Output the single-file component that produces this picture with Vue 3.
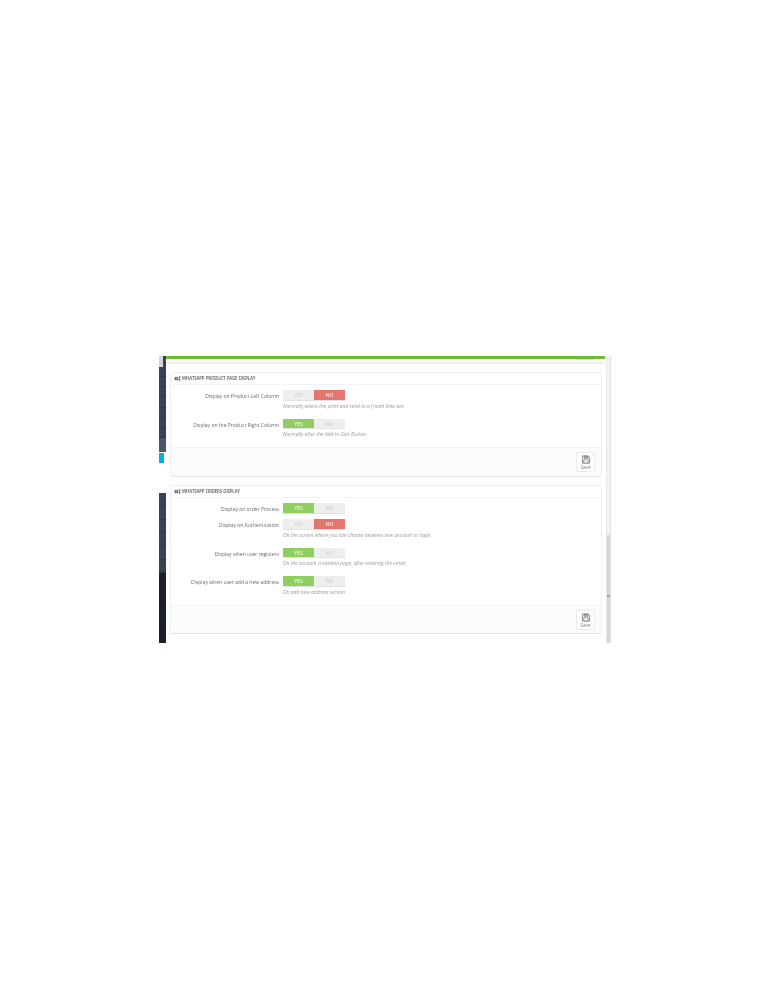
<script setup>
const panels = [
  {
    title: 'WHATSAPP PRODUCT PAGE DISPLAY',
    rows: [
      { label: 'Display on Product Left Column', on: false, help: 'Normally where the print and send to a friend links are' },
      { label: 'Display on the Product Right Column', on: true, help: 'Normally after the Add to Cart Button' }
    ]
  },
  {
    title: 'WHATSAPP ORDERS DISPLAY',
    rows: [
      { label: 'Display on order Process', on: true, help: '' },
      { label: 'Display on Authentication', on: false, help: 'On the screen where you can choose between new account or login' },
      { label: 'Display when user registers', on: true, help: 'On the account creatinon page, after entering the email' },
      { label: 'Display when user add a new address', on: true, help: 'On add new address section' }
    ]
  }
]
const navTop = [0, 1, 2, 3, 4, 5, 6]
const navBottom = [0, 1, 2, 3, 4, 5]
</script>

<template>
  <div class="page">
    <div class="frame">
      <aside class="sidebar">
        <div class="nav nav-top">
          <div class="grip"></div>
          <div v-for="n in navTop" :key="n" class="nav-item"></div>
          <div class="nav-item active"></div>
        </div>
        <div class="blue-gap"><div class="blue"></div></div>
        <div class="nav nav-bottom">
          <div v-for="n in navBottom" :key="n" class="nav-item"></div>
        </div>
        <div class="nav-dark"></div>
      </aside>

      <main class="content">
        <div class="toolbar"><span class="toolbar-btn"></span></div>

        <section v-for="panel in panels" :key="panel.title" class="panel">
          <header class="panel-head">
            <svg class="cogs" viewBox="0 0 14 10" width="7" height="5" aria-hidden="true">
              <circle cx="4.500" cy="5" r="2.600" fill="none" stroke="#4a4f57" stroke-width="2.200" />
              <circle cx="11" cy="2.600" r="1.400" fill="none" stroke="#4a4f57" stroke-width="1.600" />
              <circle cx="11" cy="7.600" r="1.400" fill="none" stroke="#4a4f57" stroke-width="1.600" />
            </svg>
            <h3>{{ panel.title }}</h3>
          </header>

          <div class="panel-body">
            <div v-for="row in panel.rows" :key="row.label" class="row" :class="{ 'has-help': row.help }">
              <label class="row-label">{{ row.label }}</label>
              <div class="row-field">
                <div class="switch">
                  <span class="opt" :class="{ yes: row.on }">YES</span>
                  <span class="opt" :class="{ no: !row.on }">NO</span>
                </div>
                <p v-if="row.help" class="help">{{ row.help }}</p>
              </div>
            </div>
          </div>

          <footer class="panel-foot">
            <button class="save" type="button">
              <svg viewBox="0 0 20 20" width="10" height="10" aria-hidden="true">
                <path d="M2 2h13l3 3v13H2z" fill="#f4f4f4" stroke="#5a6068" stroke-width="1.500" stroke-linejoin="round" />
                <path d="M6 2.500h8v5H6z" fill="#a9aeb3" stroke="#5a6068" stroke-width="1.100" />
                <path d="M5 11h10v6.500H5z" fill="#fff" stroke="#5a6068" stroke-width="1.300" />
              </svg>
              <span>Save</span>
            </button>
          </footer>
        </section>
      </main>

      <div class="scrollbar">
        <div class="thumb"><span class="thumb-grip"></span></div>
      </div>
    </div>
  </div>
</template>

<style>
html, body { margin: 0; background: #fff; }
</style>

<style scoped>
.page {
  height: 1000px;
  box-sizing: border-box;
  padding: 356px 0 0 159px;
  background: #fff;
  overflow: hidden;
  font-family: "Open Sans", "Liberation Sans", sans-serif;
}
.frame {
  display: flex;
  width: 452px;
  height: 287px;
  overflow: hidden;
  filter: blur(0.5px);
}
.sidebar {
  width: 7px;
  flex: none;
  display: flex;
  flex-direction: column;
  background: #fff;
}
.nav-top { height: 96px; background: #3a4152; display: flex; flex-direction: column; }
.grip { height: 11px; width: 4px; background: #d3d6da; flex: none; }
.nav-item { flex: 1; border-bottom: 1px solid #2d3342; background: #3a4254; }
.nav-item.active { flex: none; height: 14px; background: #4d5669; border: 0; }
.blue-gap { height: 41px; padding-top: 1px; box-sizing: border-box; }
.blue { width: 5px; height: 10px; background: #00aff0; }
.nav-bottom { height: 80px; display: flex; flex-direction: column; }
.nav-dark { flex: 1; background: #1c2029; }
.content {
  flex: 1;
  min-width: 0;
  background: #fff;
  padding: 0 4px;
  box-sizing: border-box;
}
.toolbar {
  height: 8px;
  margin: 0 -3px 7.600px -4px;
  box-sizing: border-box;
  border-top: 3px solid #6fbb31;
  border-bottom: 2px solid #efefef;
  display: flex;
  justify-content: flex-end;
  padding-right: 11px;
}
.toolbar-btn { width: 18px; height: 1px; background: #dcdcdc; }
.panel {
  border: 1px solid #eef0f1;
  border-bottom-color: #e2e4e6;
  border-radius: 2px;
  background: #fff;
  margin-bottom: 8px;
}
.panel-head {
  height: 12px;
  box-sizing: border-box;
  display: flex;
  align-items: center;
  gap: 1px;
  padding-left: 3px;
  border-bottom: 1px solid #f1f3f4;
}
.cogs { flex: none; }
h3 {
  margin: 0;
  font-size: 4.500px;
  font-weight: 600;
  color: #5c5c5c;
  white-space: nowrap;
  letter-spacing: -0.230px;
  word-spacing: 0.500px;
  line-height: 11px;
}
.panel-body { padding: 5.500px 0 8.500px; }
.row { display: flex; margin-bottom: 4px; }
.row.has-help { margin-bottom: 8.500px; }
.row:last-child { margin-bottom: 0; }
.row-label {
  width: 108px;
  flex: none;
  text-align: right;
  font-size: 5.030px;
  line-height: 12px;
  color: #6a6a6a;
  white-space: nowrap;
  margin-right: 4px;
}
.switch {
  display: flex;
  width: 62px;
  height: 10.500px;
  box-sizing: border-box;
  border-bottom: 1px solid #e2e2e2;
  background: #eee;
}
.opt {
  flex: 1;
  text-align: center;
  font-size: 5px;
  font-weight: 600;
  line-height: 10px;
  color: #cfcfcf;
}
.opt.yes { background: #8fce5f; color: #eef8e3; }
.opt.no { background: #e5766f; color: #fbe6e4; }
.help {
  margin: 2px 0 0;
  font-size: 5px;
  line-height: 7.500px;
  font-style: italic;
  color: #9a9a9a;
  white-space: nowrap;
}
.panel-foot {
  height: 28.500px;
  box-sizing: border-box;
  background: #fafbfc;
  border-top: 1px solid #f3f4f5;
  display: flex;
  justify-content: flex-end;
  align-items: flex-start;
  padding: 4px 6px 0 0;
}
.save {
  width: 19px;
  height: 20px;
  box-sizing: border-box;
  padding: 2px 0 0;
  border: 1px solid #e9eaec;
  border-radius: 1px;
  background: #fff;
  display: flex;
  flex-direction: column;
  align-items: center;
  font: inherit;
  font-size: 4.700px;
  line-height: 7px;
  color: #7d7d7d;
}
.scrollbar {
  width: 5px;
  flex: none;
  position: relative;
  box-sizing: border-box;
  background: #f3f3f3;
  border-left: 1px solid #e9e9e9;
  border-right: 1px solid #dedede;
}
.thumb {
  position: absolute;
  left: 0;
  right: 0;
  top: 179px;
  bottom: 0;
  background: #d6d6d6;
  display: flex;
  justify-content: center;
  padding-top: 60px;
}
.thumb-grip { width: 3px; height: 2px; background: #a5a5a5; }
</style>
